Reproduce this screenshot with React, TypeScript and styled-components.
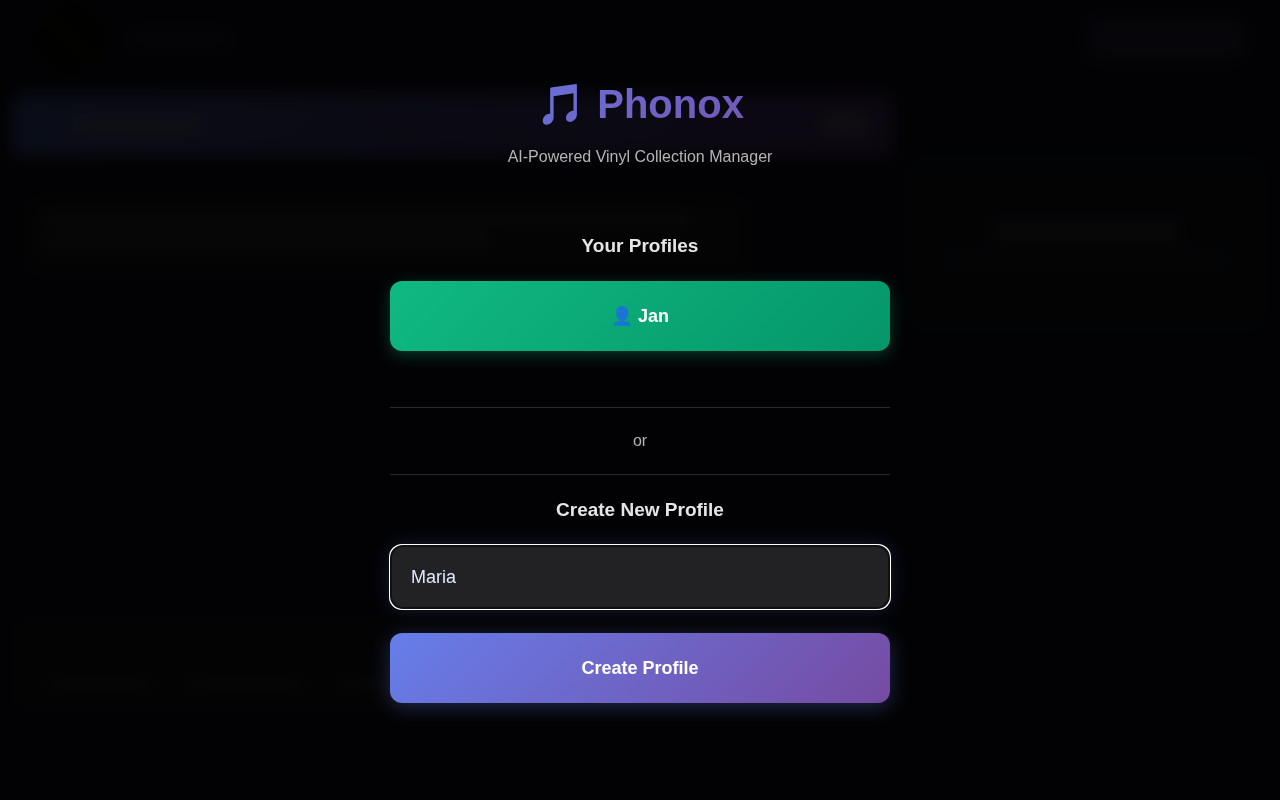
import React, { useState } from "react";
import styled, { createGlobalStyle } from "styled-components";

const GlobalStyle = createGlobalStyle`
  * { box-sizing: border-box; }
  body {
    margin: 0;
    background: #1a1a2e;
    color: #e5e5e5;
    font-family: "Liberation Sans", Arial, sans-serif;
  }
`;

const Backdrop = styled.div`
  min-height: 100vh;
  display: flex;
  flex-direction: column;
  overflow: hidden;
`;

const TopBar = styled.div`
  height: 78px;
  padding: 0 36px;
  display: flex;
  align-items: center;
  gap: 24px;
`;

const Disc = styled.div`
  width: 68px;
  height: 68px;
  border-radius: 50%;
  background: linear-gradient(45deg, #2c2a1c, #000 30%, #24200c 50%, #000 70%, #2c2a1c);
`;

const Block = styled.div<{ $width: string; $height: number; $color: string; $push?: boolean }>`
  width: ${(p) => p.$width};
  height: ${(p) => p.$height}px;
  max-width: 100%;
  border-radius: 8px;
  background: ${(p) => p.$color};
  margin-left: ${(p) => (p.$push ? "auto" : "0")};
`;

const Columns = styled.div`
  flex: 1;
  display: grid;
  grid-template-columns: minmax(0, 1fr) 356px;
  gap: 16px;
  padding: 16px 16px 88px 12px;
`;

const ChatColumn = styled.div`
  display: flex;
  flex-direction: column;
`;

const Banner = styled.div`
  height: 62px;
  padding: 0 24px 0 60px;
  display: flex;
  align-items: center;
  border-radius: 12px 12px 0 0;
  background: linear-gradient(135deg, #667eea, #764ba2);
`;

const Bubble = styled.div`
  margin: 44px 16px auto;
  width: 720px;
  max-width: 90%;
  height: 72px;
  padding: 12px 16px;
  display: flex;
  flex-direction: column;
  gap: 10px;
  border-radius: 12px;
  background: #2a2a30;
`;

const Composer = styled.div`
  height: 96px;
  padding: 60px 32px 0;
  display: flex;
  gap: 28px;
  background: #202029;
`;

const SidePanel = styled.div`
  margin-top: 64px;
  height: 172px;
  padding-top: 64px;
  display: flex;
  flex-direction: column;
  align-items: center;
  gap: 12px;
  border-radius: 12px;
  background: #1e2430;
`;

const Overlay = styled.main`
  position: fixed;
  inset: 0;
  display: flex;
  align-items: center;
  justify-content: center;
  padding: 24px;
  overflow: auto;
  background: rgba(0, 0, 0, 0.9);
  backdrop-filter: blur(8px);
`;

const Dialog = styled.div`
  width: 100%;
  max-width: 500px;
  margin: auto;
  padding-bottom: 16px;
  text-align: center;
`;

const Title = styled.h1`
  margin: 0 0 18px;
  font-size: 40px;
  line-height: 46px;
  background: linear-gradient(135deg, #667eea, #764ba2);
  -webkit-background-clip: text;
  background-clip: text;
  -webkit-text-fill-color: transparent;
`;

const Subtitle = styled.p`
  margin: 0 0 64px;
  font-size: 16px;
  line-height: 24px;
  color: #b3b3b3;
`;

const SectionTitle = styled.h2`
  display: block;
  margin: 0 0 22px;
  font-size: 19px;
  line-height: 26px;
  font-weight: bold;
`;

const ActionButton = styled.button<{ $from: string; $to: string; $glow: string }>`
  display: block;
  width: 100%;
  height: 70px;
  border: 0;
  border-radius: 12px;
  color: #fff;
  font: bold 18px "Liberation Sans", Arial, sans-serif;
  background: linear-gradient(135deg, ${(p) => p.$from}, ${(p) => p.$to});
  box-shadow: ${(p) => p.$glow};
  cursor: pointer;
`;

const Divider = styled.div`
  margin: 56px 0 22px;
  padding: 21px 0;
  border-top: 1px solid #2a2a2a;
  border-bottom: 1px solid #2a2a2a;
  font-size: 16px;
  line-height: 24px;
  color: #b3b3b3;
`;

const NameInput = styled.input`
  display: block;
  width: 100%;
  height: 64px;
  margin-bottom: 24px;
  padding: 0 19px;
  border: 2px solid #202022;
  border-radius: 12px;
  background: #222224;
  color: #e0e7ff;
  font: 18px "Liberation Sans", Arial, sans-serif;
  caret-color: transparent;
  box-shadow: 0 0 20px rgba(102, 126, 234, 0.2);
`;

export default function App() {
  const [name, setName] = useState("Maria");
  return (
    <>
      <GlobalStyle />
      <Backdrop aria-hidden="true">
        <TopBar>
          <Disc />
          <Block $width="104px" $height={20} $color="#30263c" />
          <Block $width="156px" $height={40} $color="#443e64" $push />
        </TopBar>
        <Columns>
          <ChatColumn>
            <Banner>
              <Block $width="128px" $height={12} $color="#b4b4c8" />
              <Block $width="48px" $height={20} $color="#a898b0" $push />
            </Banner>
            <Bubble>
              <Block $width="648px" $height={14} $color="#505054" />
              <Block $width="448px" $height={14} $color="#505054" />
            </Bubble>
            <Composer>
              <Block $width="112px" $height={16} $color="#404044" />
              <Block $width="124px" $height={16} $color="#404044" />
              <Block $width="112px" $height={16} $color="#404044" />
            </Composer>
          </ChatColumn>
          <SidePanel>
            <Block $width="184px" $height={20} $color="#58585c" />
            <Block $width="284px" $height={12} $color="#38383c" />
          </SidePanel>
        </Columns>
      </Backdrop>
      <Overlay>
        <Dialog>
          <Title>🎵 Phonox</Title>
          <Subtitle>AI-Powered Vinyl Collection Manager</Subtitle>
          <SectionTitle>Your Profiles</SectionTitle>
          <ActionButton
            type="button"
            $from="#10b981"
            $to="#059669"
            $glow="0 4px 15px rgba(16, 185, 129, 0.3)"
          >
            👤 Jan
          </ActionButton>
          <Divider>or</Divider>
          <form onSubmit={(e) => e.preventDefault()}>
            <SectionTitle as="label" htmlFor="profile-name">
              Create New Profile
            </SectionTitle>
            <NameInput
              id="profile-name"
              type="text"
              autoFocus
              value={name}
              onChange={(e) => setName(e.target.value)}
            />
            <ActionButton
              type="submit"
              $from="#667eea"
              $to="#764ba2"
              $glow="0 4px 20px rgba(102, 126, 234, 0.3)"
            >
              Create Profile
            </ActionButton>
          </form>
        </Dialog>
      </Overlay>
    </>
  );
}
